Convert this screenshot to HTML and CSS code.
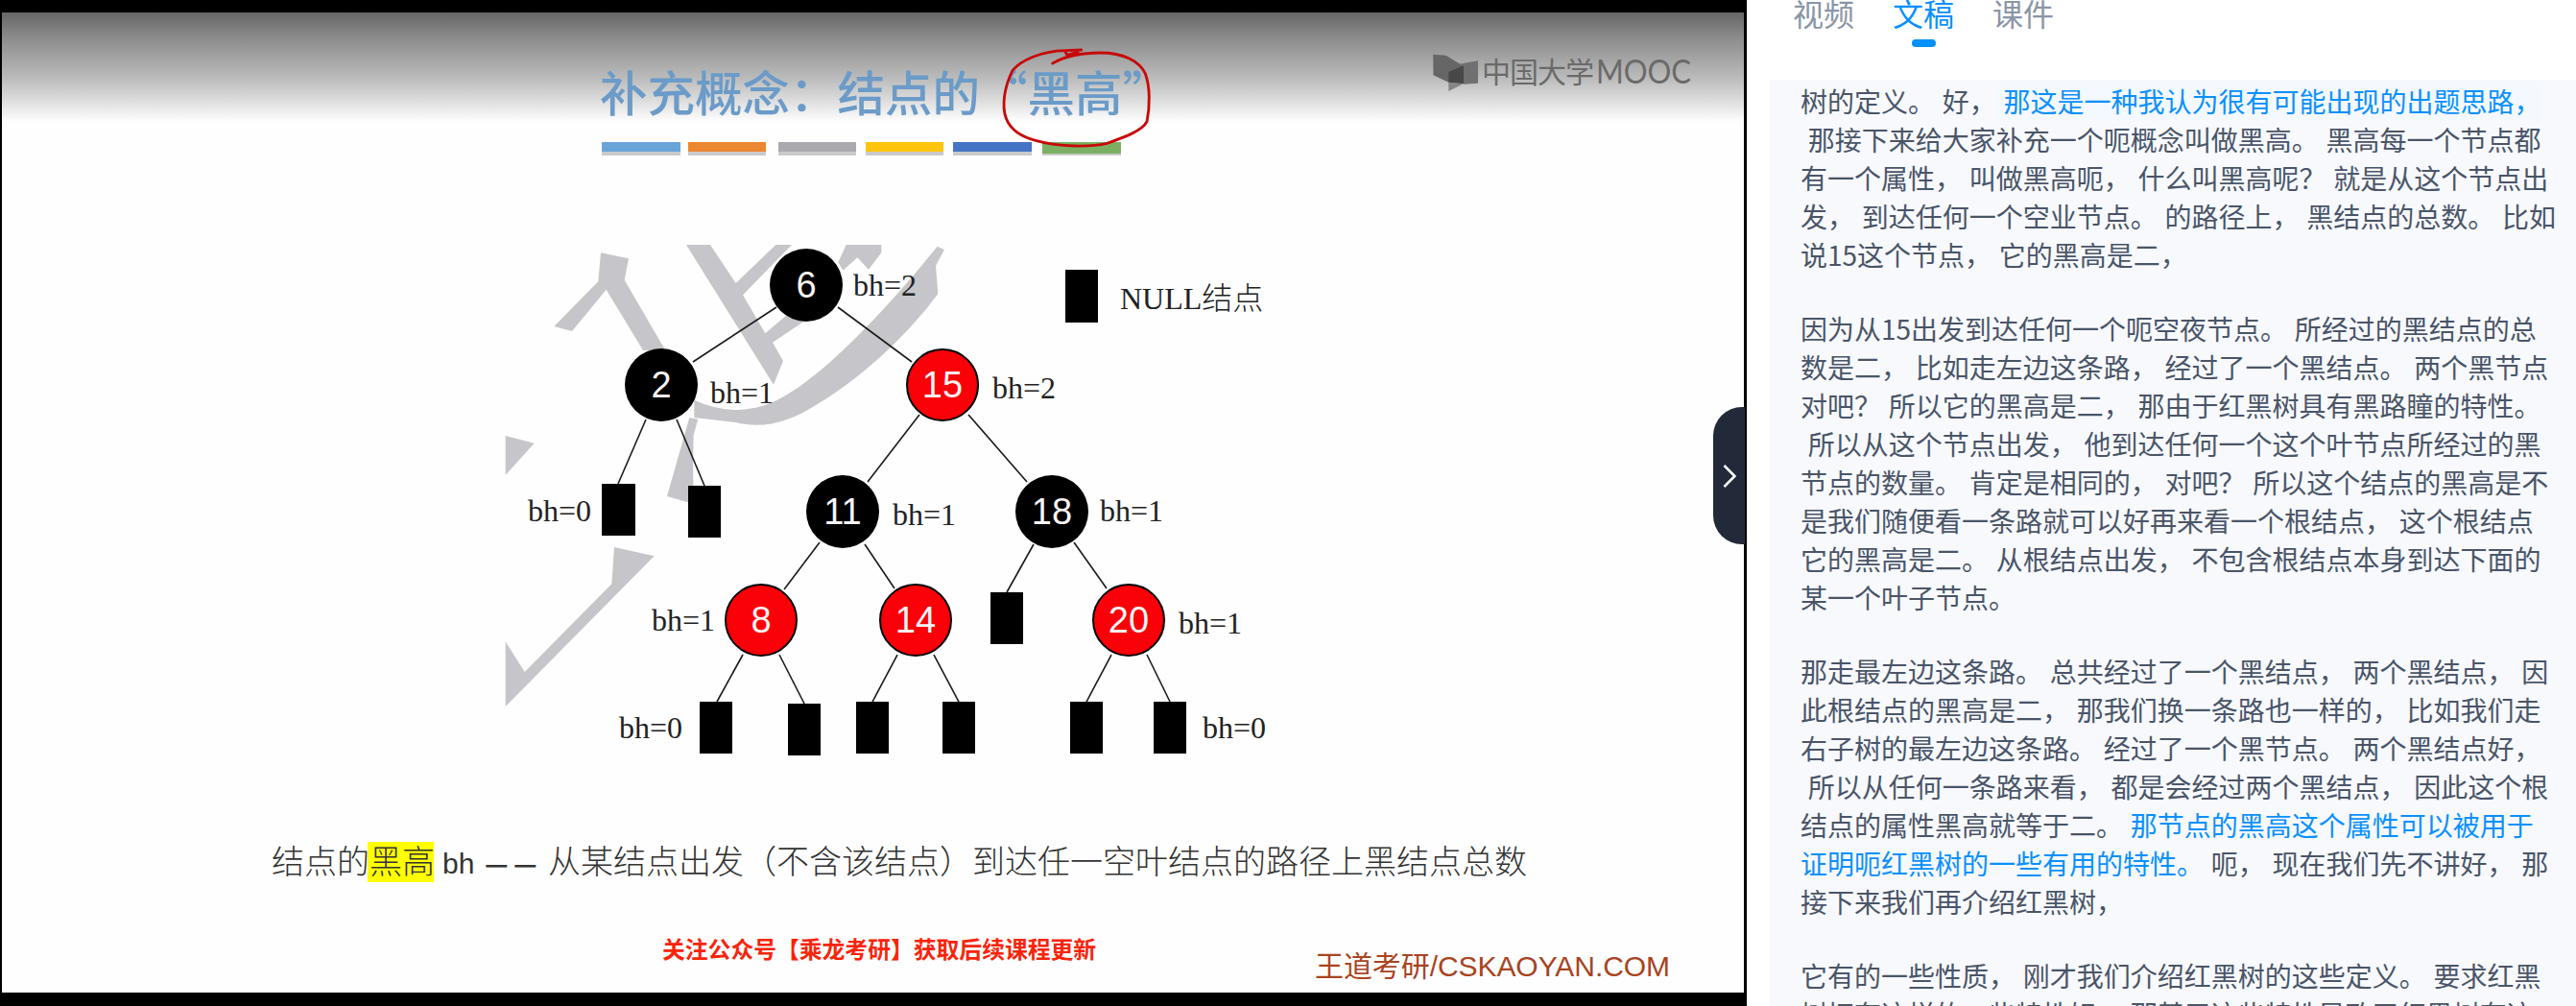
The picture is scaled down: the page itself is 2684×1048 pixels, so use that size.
FILE: index.html
```html
<!DOCTYPE html>
<html lang="zh-CN">
<head>
<meta charset="utf-8">
<title>红黑树 黑高</title>
<link rel="stylesheet" href="styles.css">
</head>
<body>
<div class="page">
  <section class="video">
    <div class="slide">
      <svg class="slide-art" width="1815" height="1021" viewBox="2 13 1815 1021">
        <g class="wm" transform="translate(520 250) scale(.33333)">
          <polygon points="318,40 405,58 392,125 520,345 450,345 335,155 228,285 172,270 310,130"/>
          <polygon points="585,15 660,15 740,135 865,15 915,15 762,172 832,292 940,200 960,250 855,320 888,378 858,452"/>
          <polygon points="1085,15 1195,15 1195,40 1155,92 1120,55 1075,95 1060,70"/>
          <path d="M1392,30 L1365,80 L1372,168 C1290,280 1150,420 1000,510 C900,575 820,590 740,570 L610,555 L610,500 C700,540 780,540 860,505 C1000,440 1200,230 1370,20 Z"/>
          <polygon points="595,555 622,560 608,610 606,690 608,825 525,801"/>
          <polygon points="20,612 110,635 20,735"/>
          <polygon points="360,960 485,988 20,1458 20,1255 80,1350 352,1075"/>
        </g>

        <text class="title" x="625" y="116">补充概念：结点的“黑高”</text>
        <g class="bar-shadow">
          <rect x="627" y="152" width="82" height="10"/><rect x="717" y="152" width="81" height="10"/>
          <rect x="811" y="152" width="81" height="10"/><rect x="902" y="152" width="81" height="10"/>
          <rect x="993" y="152" width="82" height="10"/><rect x="1086" y="152" width="82" height="10"/>
        </g>
        <rect class="bar-a" x="627" y="148" width="82" height="10"/>
        <rect class="bar-b" x="717" y="148" width="81" height="10"/>
        <rect class="bar-c" x="811" y="148" width="81" height="10"/>
        <rect class="bar-d" x="902" y="148" width="81" height="10"/>
        <rect class="bar-e" x="993" y="148" width="82" height="10"/>
        <rect class="bar-f" x="1086" y="148" width="82" height="12"/>

        <path class="ink" transform="translate(1030 40) scale(.33333)" d="M200,78 C240,55 290,45 350,45 C420,45 470,70 490,110 C505,150 505,210 495,260 C480,290 420,310 370,328 C320,340 220,340 150,320 C110,310 70,290 55,250 C40,210 50,150 75,100 C100,70 160,40 240,38 L290,36 M240,40 L245,52 L280,42"/>

        <g transform="translate(1480 45) scale(.33333)">
          <polygon class="logo-a" points="40,35 80,38 135,72 135,126 88,122 40,100"/>
          <polygon class="logo-b" points="180,55 180,125 135,128 135,72 120,65"/>
          <polygon class="logo-c" points="88,122 135,126 88,150"/>
          <polygon class="logo-d" points="88,90 135,70 135,126 88,122"/>
        </g>
        <text class="logo-cn" x="1544" y="86">中国大学</text>
        <text class="logo-en" x="1663" y="87" textLength="99" lengthAdjust="spacingAndGlyphs">MOOC</text>

        <g class="edges">
          <line x1="809" y1="320" x2="722" y2="377"/><line x1="873" y1="320" x2="950" y2="377"/>
          <line x1="673" y1="437" x2="644" y2="504"/><line x1="705" y1="437" x2="734" y2="506"/>
          <line x1="958" y1="432" x2="904" y2="502"/><line x1="1009" y1="432" x2="1070" y2="502"/>
          <line x1="854" y1="565" x2="817" y2="614"/><line x1="901" y1="567" x2="932" y2="613"/>
          <line x1="1077" y1="567" x2="1049" y2="617"/><line x1="1119" y1="565" x2="1153" y2="613"/>
          <line x1="774" y1="682" x2="747" y2="731"/><line x1="812" y1="682" x2="838" y2="733"/>
          <line x1="935" y1="682" x2="909" y2="731"/><line x1="973" y1="682" x2="999" y2="731"/>
          <line x1="1158" y1="682" x2="1132" y2="731"/><line x1="1195" y1="682" x2="1219" y2="731"/>
        </g>

        <g class="nulls">
          <rect x="1110" y="281" width="34" height="55"/>
          <rect x="627" y="504" width="35" height="54"/><rect x="717" y="506" width="34" height="54"/>
          <rect x="1032" y="617" width="34" height="54"/>
          <rect x="729" y="731" width="34" height="54"/><rect x="821" y="733" width="34" height="54"/>
          <rect x="892" y="731" width="34" height="54"/><rect x="982" y="731" width="34" height="54"/>
          <rect x="1115" y="731" width="34" height="54"/><rect x="1202" y="731" width="34" height="54"/>
        </g>

        <g class="black-nodes">
          <circle cx="840" cy="297" r="38"/><circle cx="689" cy="401" r="38"/>
          <circle cx="878" cy="533" r="38"/><circle cx="1096" cy="533" r="38"/>
        </g>
        <g class="red-nodes">
          <circle cx="982" cy="401" r="37"/><circle cx="793" cy="646" r="37"/>
          <circle cx="954" cy="646" r="37"/><circle cx="1176" cy="646" r="37"/>
        </g>
        <g class="keys">
          <text x="840" y="310">6</text><text x="689" y="414">2</text><text x="982" y="414">15</text>
          <text x="878" y="546">11</text><text x="1096" y="546">18</text>
          <text x="793" y="659">8</text><text x="954" y="659">14</text><text x="1176" y="659">20</text>
        </g>
        <g class="labels">
          <text x="889" y="308">bh=2</text><text x="740" y="420">bh=1</text><text x="1034" y="415">bh=2</text>
          <text x="550" y="543">bh=0</text><text x="930" y="547">bh=1</text><text x="1146" y="543">bh=1</text>
          <text x="679" y="657">bh=1</text><text x="1228" y="660">bh=1</text>
          <text x="645" y="769">bh=0</text><text x="1253" y="769">bh=0</text>
          <text x="1167" y="322">NULL<tspan class="labels-cn">结点</tspan></text>
        </g>

        <rect class="mark" x="383" y="877" width="69" height="42"/>
        <text class="caption" x="283" y="910">结点的黑高</text>
        <text class="caption-latin" x="461" y="910">bh</text>
        <text class="caption-dash" x="505 535" y="910">——</text>
        <text class="caption" x="571" y="910">从某结点出发（不含该结点）到达任一空叶结点的路径上黑结点总数</text>

        <text class="promo" x="690" y="998">关注公众号【乘龙考研】获取后续课程更新</text>
        <text class="brand" x="1370" y="1017" textLength="370">王道考研/CSKAOYAN.COM</text>
      </svg>
    </div>
    <button class="collapse" type="button" aria-label="收起">
      <svg width="14" height="24" viewBox="0 0 14 24"><path d="M1.5,1 L12.5,12 L1.5,23"/></svg>
    </button>
  </section>

  <aside class="side">
    <nav class="tabs">
      <div class="tab">视频</div>
      <div class="tab tab-on">文稿<i class="tab-line"></i></div>
      <div class="tab">课件</div>
    </nav>
    <div class="script">
<p>树的定义。 好，<span class="hl hl-now"> 那这是一种我认为很有可能出现的出题思路，</span>
 那接下来给大家补充一个呃概念叫做黑高。 黑高每一个节点都
有一个属性， 叫做黑高呃， 什么叫黑高呢？ 就是从这个节点出
发， 到达任何一个空业节点。 的路径上， 黑结点的总数。 比如
说15这个节点， 它的黑高是二，</p>
<p>因为从15出发到达任何一个呃空夜节点。 所经过的黑结点的总
数是二， 比如走左边这条路， 经过了一个黑结点。 两个黑节点
对吧？ 所以它的黑高是二， 那由于红黑树具有黑路瞳的特性。
 所以从这个节点出发， 他到达任何一个这个叶节点所经过的黑
节点的数量。 肯定是相同的， 对吧？ 所以这个结点的黑高是不
是我们随便看一条路就可以好再来看一个根结点， 这个根结点
它的黑高是二。 从根结点出发， 不包含根结点本身到达下面的
某一个叶子节点。</p>
<p>那走最左边这条路。 总共经过了一个黑结点， 两个黑结点， 因
此根结点的黑高是二， 那我们换一条路也一样的， 比如我们走
右子树的最左边这条路。 经过了一个黑节点。 两个黑结点好，
 所以从任何一条路来看， 都是会经过两个黑结点， 因此这个根
结点的属性黑高就等于二。<span class="hl"> 那节点的黑高这个属性可以被用于
证明呃红黑树的一些有用的特性。</span> 呃， 现在我们先不讲好， 那
接下来我们再介绍红黑树，</p>
<p>它有的一些性质， 刚才我们介绍红黑树的这些定义。 要求红黑
树拥有这样的一些特性好， 那基于这些特性导致了红黑树有这</p>
    </div>
  </aside>
</div>
</body>
</html>
```

FILE: styles.css
```css
* { box-sizing: border-box; }
html, body { margin: 0; height: 100%; overflow: hidden; background: #fff; }
body { font-family: "Noto Sans CJK SC", "Noto Sans", sans-serif; }

.page { display: flex; width: 2684px; height: 1048px; overflow: hidden; }

.video {
  position: relative;
  flex: 0 0 1820px;
  height: 1048px;
  padding: 13px 3px 14px 2px;
  background: #000;
}
.slide {
  width: 100%;
  height: 100%;
  background: linear-gradient(#666 0, #8a8a8a 25px, #bdbdbd 70px, #fefefe 114px, #fefefe 100%);
}
.slide-art { display: block; font-family: "Noto Sans CJK SC", sans-serif; }

.wm { fill: #c6c5c9; }
.title { font-size: 49.5px; font-weight: 500; fill: #6b9bc8; }
.bar-shadow { fill: #8d8d8d; opacity: .45; }
.bar-a { fill: #69a4d9; }
.bar-b { fill: #ec8732; }
.bar-c { fill: #aaa9ad; }
.bar-d { fill: #fdc60c; }
.bar-e { fill: #4474c6; }
.bar-f { fill: #7bb062; }
.ink { fill: none; stroke: #c80808; stroke-width: 8.5; stroke-linecap: round; stroke-linejoin: round; }

.logo-a { fill: #666; }
.logo-b { fill: #707070; }
.logo-c { fill: #858585; }
.logo-d { fill: #484848; }
.logo-cn { font-size: 30px; fill: #6a6a6a; letter-spacing: -1px; }
.logo-en { font-family: Lato, sans-serif; font-size: 35px; fill: #6a6a6a; }

.edges line { stroke: #1a1a1a; stroke-width: 1.6; }
.nulls { fill: #000; }
.black-nodes { fill: #000; }
.red-nodes { fill: #fa0008; stroke: #000; stroke-width: 2; }
.keys { font-family: "Liberation Sans", sans-serif; font-size: 38px; fill: #f8f4f4; text-anchor: middle; }
.labels { font-family: "Liberation Serif", "Noto Sans CJK SC", serif; font-size: 32px; fill: #222; }
.labels-cn { font-weight: 300; }

.mark { fill: #ffff00; }
.caption { font-size: 34px; font-weight: 300; fill: #333; }
.caption-latin { font-family: "Liberation Sans", sans-serif; font-size: 30px; fill: #333; }
.caption-dash { font-size: 27px; font-weight: 700; fill: #333; }
.promo { font-size: 23.8px; font-weight: 700; fill: #f8240a; }
.brand { font-family: "Liberation Sans", "Noto Sans CJK SC", sans-serif; font-size: 30px; fill: #a8441f; }

.collapse {
  position: absolute;
  top: 424px;
  right: 2px;
  display: flex;
  align-items: center;
  justify-content: center;
  width: 33px;
  height: 143px;
  padding: 0;
  border: 0;
  border-radius: 30px 0 0 30px;
  background: #222a3a;
}
.collapse path { fill: none; stroke: #fff; stroke-width: 2.6; }

.side { flex: 1; min-width: 0; display: flex; flex-direction: column; height: 1048px; }
.tabs {
  display: flex;
  gap: 40px;
  height: 86px;
  margin-top: -3px;
  padding: 0 0 0 48px;
  flex: none;
}
.tab {
  display: flex;
  flex-direction: column;
  align-items: center;
  gap: 12px;
  font-size: 32px;
  line-height: 32px;
  color: #8b95a7;
}
.tab-on { color: #0a90ff; }
.tab-line { display: block; width: 25px; height: 8px; border-radius: 4px; background: #0091ff; }

.script {
  flex: 1;
  min-height: 0;
  overflow: hidden;
  margin-left: 24px;
  padding: 2px 0 0 32px;
  background: #f7f9fd;
  font-size: 28px;
  line-height: 40px;
  color: #4a5568;
  word-spacing: 1.5px;
}
.script p { margin: 0 0 37px; white-space: pre; }
.hl { color: #0a90ff; }
.hl-now { background: #f4f8ff; }
```
